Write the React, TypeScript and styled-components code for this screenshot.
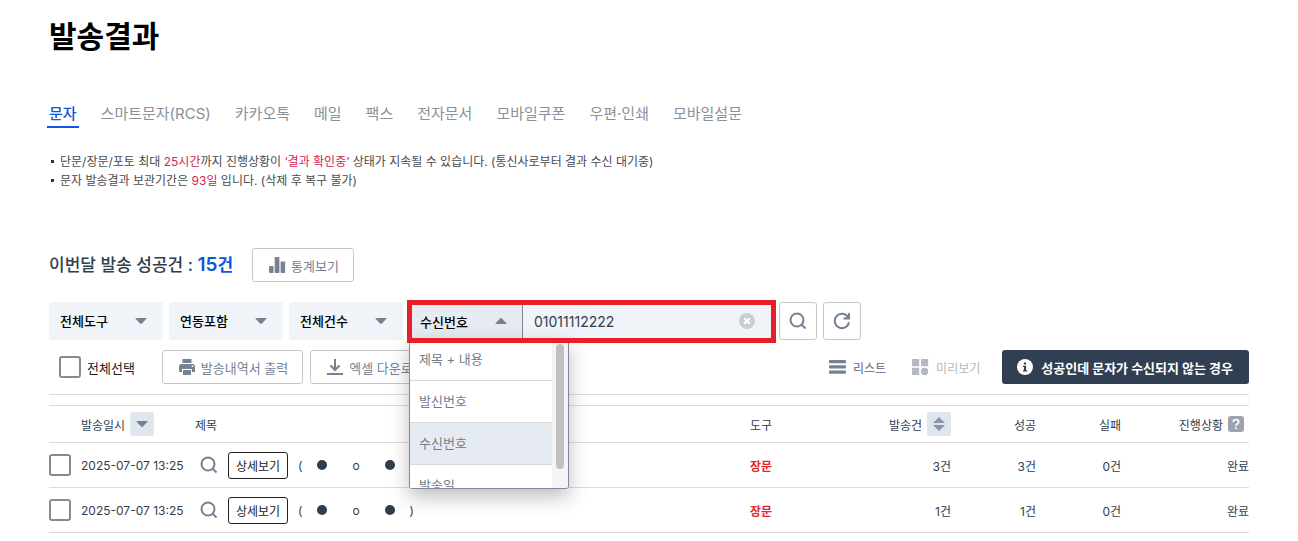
import React from "react";
import styled, { createGlobalStyle, css } from "styled-components";

const sans = `Inter, "Noto Sans CJK KR", sans-serif`;

const color = {
  ink: "#2f3d4f",
  slate: "#768294",
  line: "#dcdcdf",
  field: "#f0f4f8",
  fieldActive: "#e6ebf2",
  blue: "#0d56e0",
  crimson: "#d6224e",
};

const GlobalStyle = createGlobalStyle`
  *, *::before, *::after { box-sizing: border-box; }
  body { margin: 0; background: #fff; }
  body, button, input, select { font-family: ${sans}; font-size: 13px; color: ${color.ink}; }
  button { padding: 0; border: 0; background: none; cursor: pointer; }
  svg { display: block; flex: none; }
`;

const Page = styled.main`
  padding: 16px 49px 8px;
`;

const Title = styled.h1`
  margin: 0;
  font-size: 30px;
  line-height: 40px;
  font-weight: 700;
  color: #000;
`;

const Tabs = styled.nav`
  display: flex;
  gap: 20px;
  margin: 46px -2px 0;
`;

const Tab = styled.a<{ $active?: boolean }>`
  padding: 0 2px;
  height: 26px;
  line-height: 24px;
  font-size: 15px;
  white-space: nowrap;
  text-decoration: none;
  color: #8c9097;
  ${(p) =>
    p.$active &&
    css`
      color: ${color.blue};
      font-weight: 500;
      border-bottom: 2px solid ${color.blue};
    `}
`;

const Notes = styled.ul`
  margin: 24px 0 0;
  padding: 0;
  list-style: none;
`;

const Note = styled.li`
  display: flex;
  align-items: center;
  gap: 6px;
  padding-left: 2px;
  font-size: 12px;
  line-height: 19px;
  color: #4a4a4c;
  &::before {
    content: "";
    width: 3px;
    height: 3px;
    background: #333;
  }
`;

const Mark = styled.em`
  font-style: normal;
  color: ${color.crimson};
`;

const Summary = styled.section`
  display: flex;
  align-items: center;
  gap: 19px;
  margin-top: 58px;
`;

const SummaryText = styled.p`
  margin: 0;
  font-size: 17px;
  line-height: 24px;
  font-weight: 500;
  white-space: nowrap;
  strong {
    font-weight: 600;
    color: ${color.blue};
  }
  b {
    font-weight: 600;
    font-size: 19px;
  }
`;

const OutlineButton = styled.button`
  display: flex;
  align-items: center;
  gap: 5px;
  height: 34px;
  padding: 0 14px 0 15px;
  border: 1px solid #c4c6cb;
  border-radius: 3px;
  background: #fff;
  color: ${color.slate};
  white-space: nowrap;
`;

const Filters = styled.form`
  display: flex;
  gap: 6px;
  margin-top: 20px;
`;

const SelectBox = styled.div`
  position: relative;
  width: 114px;
  svg {
    position: absolute;
    right: 16px;
    top: 16px;
    pointer-events: none;
  }
`;

const Select = styled.select`
  appearance: none;
  width: 100%;
  height: 38px;
  padding: 0 11px;
  border: 0;
  border-radius: 3px;
  background: ${color.field};
  font-weight: 500;
  color: #000;
`;

const SearchGroup = styled.div`
  position: relative;
  display: flex;
  width: 364px;
  height: 38px;
  background: ${color.field};
  &::after {
    content: "";
    position: absolute;
    inset: -2px -3px -3px -2px;
    border: 5px solid #e81f27;
    pointer-events: none;
    z-index: 3;
  }
`;

const FieldButton = styled.button`
  display: flex;
  align-items: center;
  justify-content: space-between;
  width: 114px;
  padding: 0 15px 0 11px;
  border-right: 1px solid #7f8899;
  background: ${color.fieldActive};
  font-weight: 500;
  color: #000;
`;

const SearchInput = styled.input`
  flex: 1;
  min-width: 0;
  padding: 0 0 0 11px;
  border: 0;
  outline: 0;
  background: none;
  font-size: 14px;
`;

const ClearButton = styled.button`
  padding-right: 18px;
`;

const Popup = styled.div`
  position: absolute;
  top: 36px;
  left: 0;
  z-index: 2;
  display: flex;
  width: 160px;
  height: 151px;
  overflow: hidden;
  border: 1px solid #80889c;
  border-radius: 3px;
  background: #fff;
  box-shadow: 0 8px 20px rgba(0, 0, 0, 0.26);
`;

const Options = styled.ul`
  flex: 1;
  margin: 0;
  padding: 0;
  list-style: none;
`;

const Option = styled.li<{ $selected?: boolean }>`
  height: 42px;
  padding: 0 9px;
  border-bottom: 1px solid #d6d9dc;
  line-height: 41px;
  color: #747c88;
  background: ${(p) => (p.$selected ? color.fieldActive : "#fff")};
`;

const ScrollTrack = styled.div`
  width: 16px;
  padding: 5px 4px;
  background: #f4f4f4;
`;

const ScrollThumb = styled.div`
  height: 125px;
  border-radius: 4px;
  background: #c1c1c1;
`;

const IconButton = styled.button`
  display: grid;
  place-items: center;
  width: 38px;
  height: 38px;
  border: 1px solid #c4c6cb;
  border-radius: 3px;
  background: #fff;
`;

const Toolbar = styled.section`
  display: flex;
  align-items: center;
  gap: 7px;
  margin-top: 10px;
  padding-bottom: 10px;
  border-bottom: 1px solid ${color.line};
`;

const CheckLabel = styled.label`
  display: flex;
  align-items: center;
  gap: 6px;
  margin: 0 20px 0 10px;
  color: #222;
  white-space: nowrap;
`;

const Checkbox = styled.input.attrs({ type: "checkbox" })`
  appearance: none;
  display: block;
  width: 22px;
  height: 22px;
  margin: 0;
  border: 2px solid #8a8a8a;
  border-radius: 3px;
  background: #fff;
`;

const ViewSwitch = styled.div`
  display: flex;
  gap: 26px;
  margin: 0 15px 0 auto;
`;

const ViewButton = styled.button<{ $dim?: boolean }>`
  display: flex;
  align-items: center;
  gap: 7px;
  font-size: 12px;
  font-weight: ${(p) => (p.$dim ? 400 : 500)};
  color: ${(p) => (p.$dim ? "#b4b8c1" : color.slate)};
  white-space: nowrap;
`;

const HelpButton = styled.button`
  display: flex;
  align-items: center;
  gap: 8px;
  height: 34px;
  padding: 0 16px 0 15px;
  border-radius: 3px;
  background: #313f52;
  color: #fff;
  font-weight: 700;
  white-space: nowrap;
`;

const Table = styled.table`
  width: 100%;
  margin-top: 10px;
  border-top: 1px solid ${color.line};
  border-spacing: 0;
  table-layout: fixed;
`;

const cell = css<{ $align?: string }>`
  padding: 0;
  border-bottom: 1px solid ${color.line};
  text-align: ${(p) => p.$align || "left"};
  white-space: nowrap;
  font-size: 12px;
`;

const Th = styled.th<{ $align?: string }>`
  ${cell}
  height: 37px;
  font-weight: 400;
`;

const Td = styled.td<{ $align?: string; $red?: boolean }>`
  ${cell}
  height: 45px;
  ${(p) => p.$red && "color: #e8262b; font-weight: 700;"}
`;

const HeadGroup = styled.div<{ $end?: boolean }>`
  display: flex;
  align-items: center;
  gap: 5px;
  justify-content: ${(p) => (p.$end ? "flex-end" : "flex-start")};
`;

const StatusHead = styled(HeadGroup)`
  padding-right: 5px;
`;

const SortButton = styled.button`
  display: grid;
  place-items: center;
  width: 24px;
  height: 24px;
  border-radius: 3px;
  background: #dfe6ee;
`;

const TitleCell = styled.div`
  display: flex;
  align-items: center;
  padding-left: 5px;
  gap: 10px;
`;

const DetailButton = styled.button`
  width: 60px;
  height: 27px;
  border: 1px solid #222;
  border-radius: 3px;
  background: #fff;
  font-size: 12px;
  color: #222;
`;

const Masked = styled.span`
  display: flex;
  align-items: center;
  justify-content: space-between;
  width: 116px;
`;

const Middle = styled.span`
  padding: 0 10px;
`;

const Dot = styled.i`
  width: 10px;
  height: 10px;
  border-radius: 50%;
  background: ${color.ink};
`;

const Arrow = ({ up, w = 12, fill = color.slate }: { up?: boolean; w?: number; fill?: string }) => (
  <svg width={w} height="6" viewBox="0 0 12 6" fill={fill} preserveAspectRatio="none" aria-hidden>
    <path d={up ? "M1 6h10q1 0 .4-.7L7 .5Q6 -.4 5 .5L.6 5.300Q0 6 1 6z" : "M1 0h10q1 0 .4.7L7 5.500Q6 6.400 5 5.500L.6.7Q0 0 1 0z"} />
  </svg>
);

const SearchIcon = () => (
  <svg width="18" height="18" viewBox="0 0 18 18" fill="none" stroke={color.slate} strokeWidth="2" aria-hidden>
    <circle cx="8" cy="8" r="6.5" />
    <path d="M12.500 12.500L16.500 16.500" />
  </svg>
);

const RefreshIcon = () => (
  <svg width="18" height="18" viewBox="0 0 18 18" fill="none" stroke={color.slate} strokeWidth="2" aria-hidden>
    <path d="M16 10.300A7.200 7.200 0 1 1 14.800 4.700" />
    <path d="M16 1v5.500h-5.500" />
    <path d="M15.500 3v3h-3z" fill={color.slate} stroke="none" />
  </svg>
);

const ClearIcon = () => (
  <svg width="16" height="16" viewBox="0 0 16 16" aria-hidden>
    <circle cx="8" cy="8" r="8" fill="#c9ced4" />
    <path d="M5.200 5.200l5.600 5.600M10.800 5.200l-5.600 5.600" stroke="#fff" strokeWidth="2" />
  </svg>
);

const ChartIcon = () => (
  <svg width="18" height="16" viewBox="0 0 18 16" fill={color.slate} aria-hidden>
    <rect x="1" y="9" width="4.500" height="7" rx=".7" />
    <rect x="6.700" y="0" width="4.700" height="16" rx=".7" />
    <rect x="12.600" y="4.500" width="4.500" height="11.500" rx=".7" />
  </svg>
);

const PrinterIcon = () => (
  <svg width="18" height="16" viewBox="0 0 18 16" fill={color.slate} aria-hidden>
    <rect x="4.500" y="0" width="9" height="4" />
    <path fillRule="evenodd" d="M3.500 5h11A2.500 2.500 0 0 1 17 7.500V13h-3v-3H4v3H1V7.500A2.500 2.500 0 0 1 3.500 5zm10.200 1.500v1.500h1.600V6.500z" />
    <rect x="5" y="11" width="8" height="5" />
  </svg>
);

const DownloadIcon = () => (
  <svg width="18" height="16" viewBox="0 0 18 16" fill="none" stroke={color.slate} strokeWidth="2" aria-hidden>
    <path d="M9 0v10.500M4.500 6.500L9 11l4.500-4.500M1 15h16" />
  </svg>
);

const ListIcon = () => (
  <svg width="17" height="14" viewBox="0 0 17 14" fill={color.slate} aria-hidden>
    <rect y="0" width="17" height="3.200" rx="1" />
    <rect y="5.300" width="17" height="3.200" rx="1" />
    <rect y="10.600" width="17" height="3.200" rx="1" />
  </svg>
);

const GridIcon = () => (
  <svg width="17" height="16" viewBox="0 0 17 16" fill="#b4b8c1" aria-hidden>
    <rect width="7.200" height="7.200" rx=".6" />
    <rect x="9" width="7.200" height="7.200" rx=".6" />
    <rect y="8.800" width="7.200" height="7.200" rx=".6" />
    <circle cx="12.600" cy="12.400" r="3.600" />
  </svg>
);

const InfoIcon = () => (
  <svg width="16" height="16" viewBox="0 0 16 16" aria-hidden>
    <circle cx="8" cy="8" r="8" fill="#fff" />
    <path d="M6.900 3.500h2.200v2H6.900zM6 6.700h3.100v4.500h1v1.300H6v-1.300h1V8H6z" fill="#313f52" />
  </svg>
);

const HelpIcon = () => (
  <svg width="16" height="16" viewBox="0 0 16 16" fill="none" aria-hidden>
    <rect width="16" height="16" rx="3" fill="#9aa3af" />
    <path d="M5.300 6C5.300 2.600 10.700 2.700 10.700 5.900 10.700 7.900 8 7.900 8 10" stroke="#fff" strokeWidth="1.700" />
    <rect x="7.100" y="11.300" width="1.800" height="1.900" fill="#fff" />
  </svg>
);

const SortIcon = () => (
  <svg width="12" height="14" viewBox="0 0 12 14" fill="#8896a8" aria-hidden>
    <path d="M0 6L6 0l6 6zM0 8h12l-6 6z" />
  </svg>
);

const tabs = ["문자", "스마트문자(RCS)", "카카오톡", "메일", "팩스", "전자문서", "모바일쿠폰", "우편·인쇄", "모바일설문"];
const filters = ["전체도구", "연동포함", "전체건수"];
const options = ["제목 + 내용", "발신번호", "수신번호", "발송일"];
const rows = [
  { date: "2025-07-07 13:25", tool: "장문", sent: "3건", ok: "3건", fail: "0건", status: "완료" },
  { date: "2025-07-07 13:25", tool: "장문", sent: "1건", ok: "1건", fail: "0건", status: "완료" },
];

export default function App() {
  return (
    <Page>
      <GlobalStyle />
      <Title>발송결과</Title>
      <Tabs>
        {tabs.map((t, i) => (
          <Tab key={t} href="#" $active={i === 0}>{t}</Tab>
        ))}
      </Tabs>
      <Notes>
        <Note>
          <span>단문/장문/포토 최대 <Mark>25시간</Mark>까지 진행상황이 <Mark>‘결과 확인중’</Mark> 상태가 지속될 수 있습니다. (통신사로부터 결과 수신 대기중)</span>
        </Note>
        <Note>
          <span>문자 발송결과 보관기간은 <Mark>93일</Mark> 입니다. (삭제 후 복구 불가)</span>
        </Note>
      </Notes>

      <Summary>
        <SummaryText>이번달 발송 성공건 : <strong><b>15</b>건</strong></SummaryText>
        <OutlineButton type="button"><ChartIcon />통계보기</OutlineButton>
      </Summary>

      <Filters onSubmit={(e) => e.preventDefault()}>
        {filters.map((f) => (
          <SelectBox key={f}>
            <Select aria-label={f} defaultValue={f}><option>{f}</option></Select>
            <Arrow />
          </SelectBox>
        ))}
        <SearchGroup>
          <FieldButton type="button" aria-haspopup="listbox" aria-expanded="true">수신번호<Arrow up /></FieldButton>
          <SearchInput aria-label="검색어" defaultValue="01011112222" />
          <ClearButton type="button" aria-label="지우기"><ClearIcon /></ClearButton>
          <Popup>
            <Options role="listbox">
              {options.map((o) => (
                <Option key={o} role="option" aria-selected={o === "수신번호"} $selected={o === "수신번호"}>{o}</Option>
              ))}
            </Options>
            <ScrollTrack><ScrollThumb /></ScrollTrack>
          </Popup>
        </SearchGroup>
        <IconButton type="submit" aria-label="검색"><SearchIcon /></IconButton>
        <IconButton type="reset" aria-label="초기화"><RefreshIcon /></IconButton>
      </Filters>

      <Toolbar>
        <CheckLabel><Checkbox />전체선택</CheckLabel>
        <OutlineButton type="button"><PrinterIcon />발송내역서 출력</OutlineButton>
        <OutlineButton type="button"><DownloadIcon />엑셀 다운로드</OutlineButton>
        <ViewSwitch>
          <ViewButton type="button"><ListIcon />리스트</ViewButton>
          <ViewButton type="button" $dim><GridIcon />미리보기</ViewButton>
        </ViewSwitch>
        <HelpButton type="button"><InfoIcon />성공인데 문자가 수신되지 않는 경우</HelpButton>
      </Toolbar>

      <Table>
        <colgroup>
          <col style={{ width: 32 }} />
          <col style={{ width: 114 }} />
          <col />
          <col style={{ width: 100 }} />
          <col style={{ width: 140 }} />
          <col style={{ width: 85 }} />
          <col style={{ width: 85 }} />
          <col style={{ width: 128 }} />
        </colgroup>
        <thead>
          <tr>
            <Th />
            <Th><HeadGroup>발송일시<SortButton type="button" aria-label="발송일시 정렬"><Arrow /></SortButton></HeadGroup></Th>
            <Th>제목</Th>
            <Th $align="center">도구</Th>
            <Th><HeadGroup $end>발송건<SortButton type="button" aria-label="발송건 정렬"><SortIcon /></SortButton></HeadGroup></Th>
            <Th $align="right">성공</Th>
            <Th $align="right">실패</Th>
            <Th><StatusHead $end>진행상황<HelpIcon /></StatusHead></Th>
          </tr>
        </thead>
        <tbody>
          {rows.map((r, i) => (
            <tr key={i}>
              <Td><Checkbox aria-label={`${i + 1}번째 발송건 선택`} /></Td>
              <Td>{r.date}</Td>
              <Td>
                <TitleCell>
                  <SearchIcon />
                  <DetailButton type="button">상세보기</DetailButton>
                  <Masked><span>(</span><Dot /><Middle>o</Middle><Dot /><span>)</span></Masked>
                </TitleCell>
              </Td>
              <Td $align="center" $red>{r.tool}</Td>
              <Td $align="right">{r.sent}</Td>
              <Td $align="right">{r.ok}</Td>
              <Td $align="right">{r.fail}</Td>
              <Td $align="right">{r.status}</Td>
            </tr>
          ))}
        </tbody>
      </Table>
    </Page>
  );
}
